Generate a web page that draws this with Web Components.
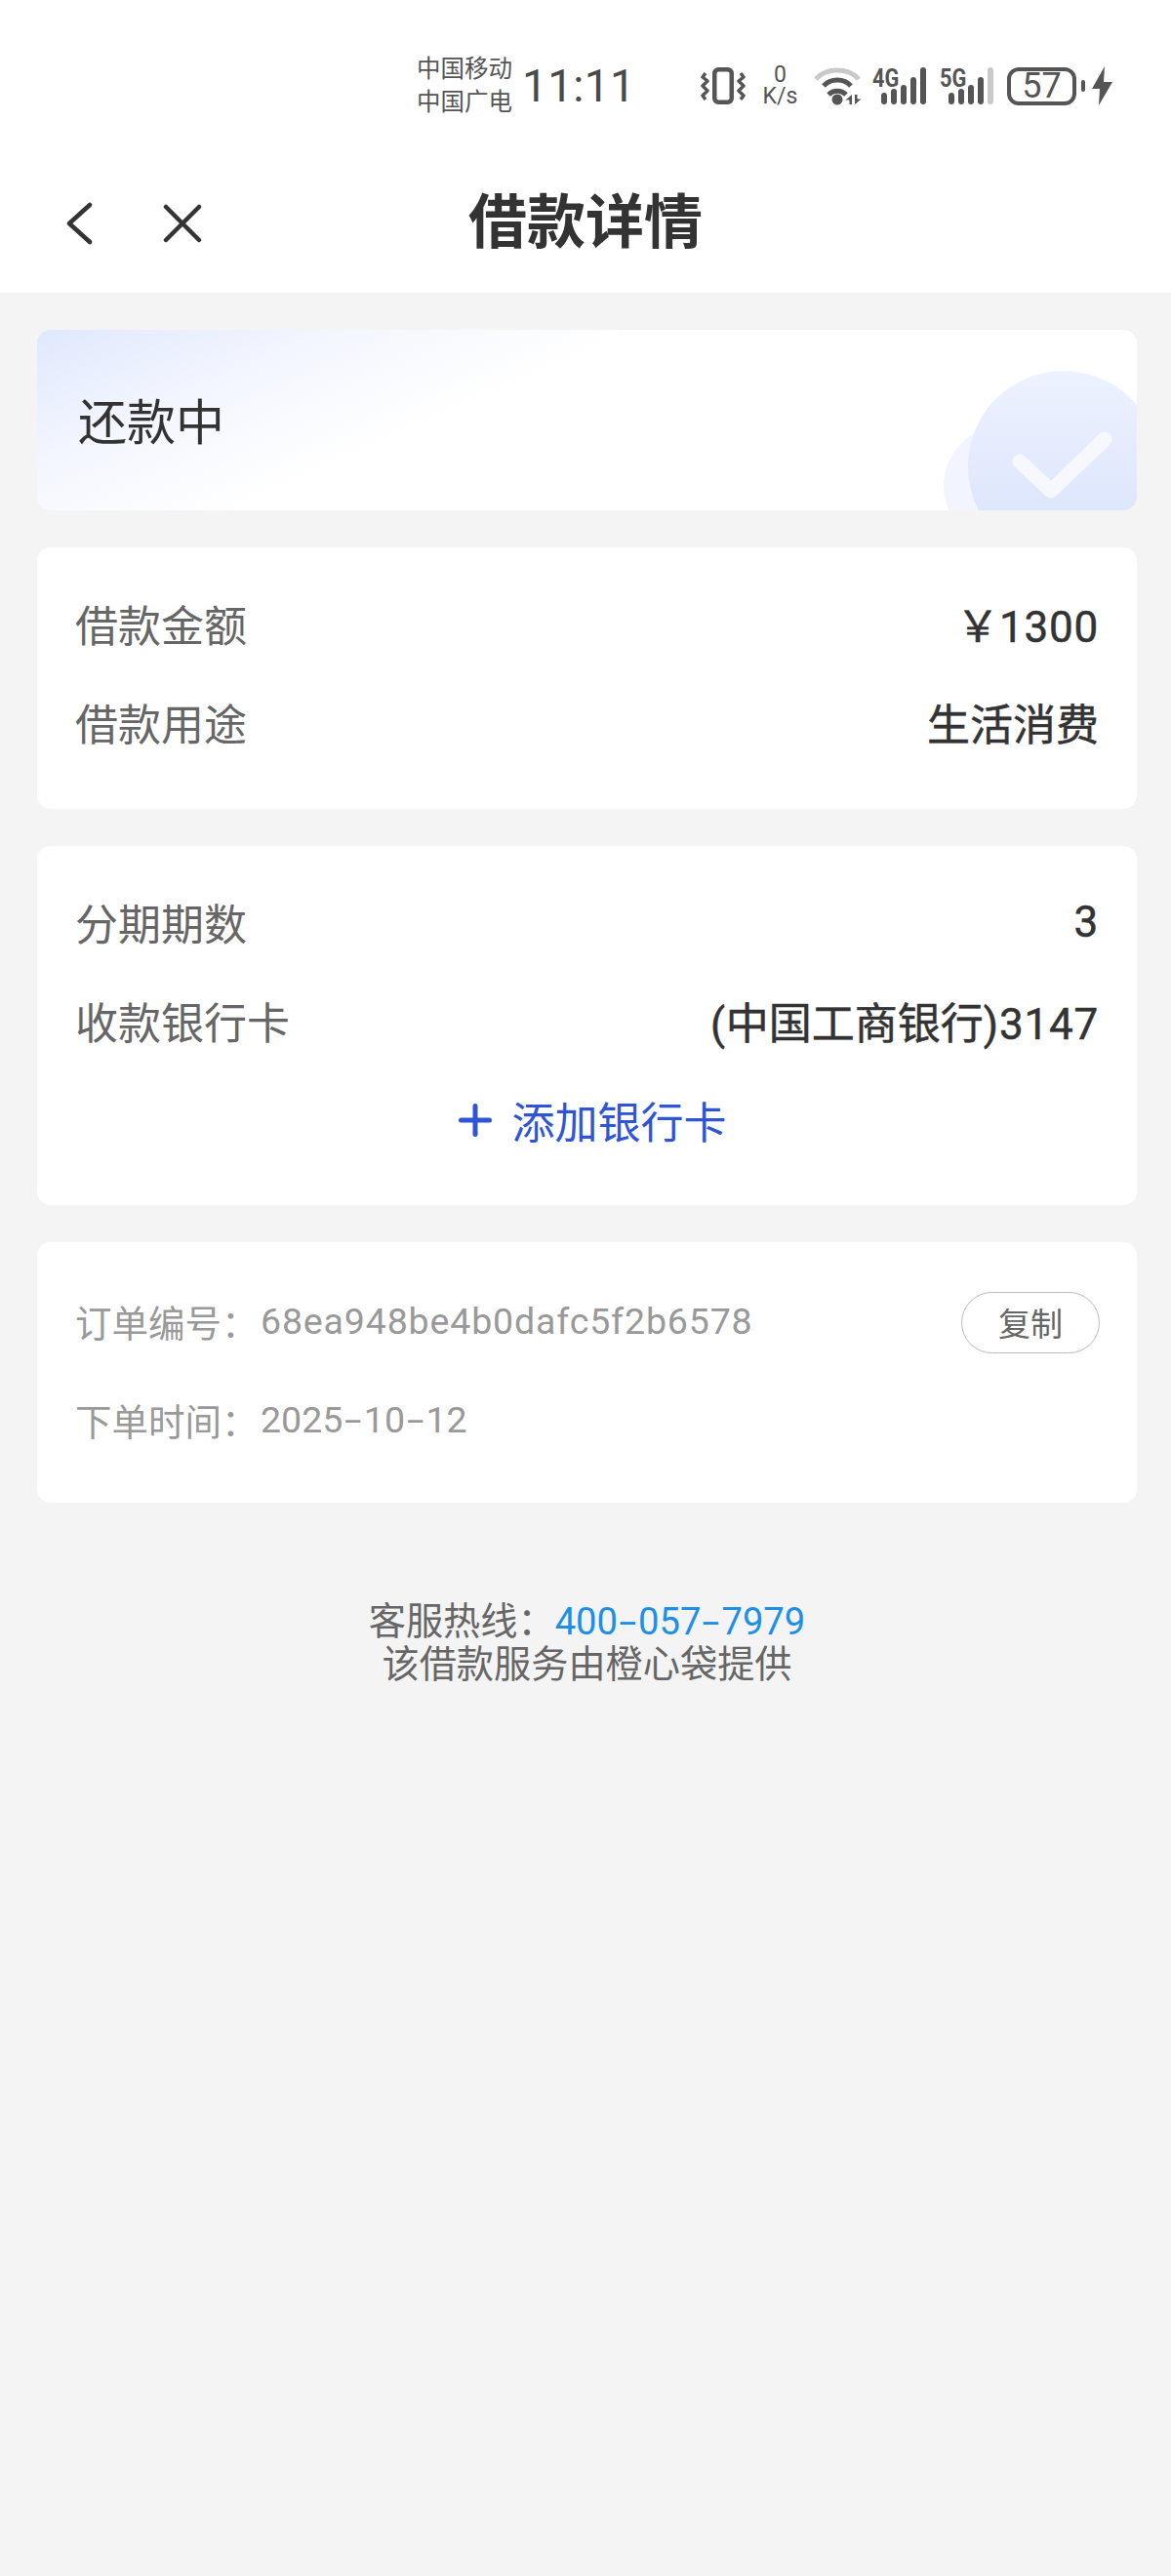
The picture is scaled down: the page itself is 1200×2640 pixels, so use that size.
<!DOCTYPE html>
<html lang="zh">
<head>
<meta charset="utf-8">
<title>借款详情</title>
<style>
  html, body { margin: 0; padding: 0; }
  body {
    width: 1200px; min-height: 2640px; background: #f4f4f4; color: #333;
    font-family: Roboto, "Noto Sans CJK SC", sans-serif;
  }
  main { display: flex; flex-direction: column; gap: 38px; padding: 38px 35px 0 38px; }
</style>
</head>
<body>
<app-header title="借款详情"></app-header>
<main>
  <status-banner>还款中</status-banner>
  <info-card>
    <info-row label="借款金额" value="￥1300"></info-row>
    <info-row label="借款用途" value="生活消费"></info-row>
  </info-card>
  <info-card>
    <info-row label="分期期数" value="3"></info-row>
    <info-row label="收款银行卡" value="(中国工商银行)3147"></info-row>
    <add-card>添加银行卡</add-card>
  </info-card>
  <order-card>
    <order-row label="订单编号：" value="68ea948be4b0dafc5f2b6578" style="--value-spacing: .85px"><copy-button>复制</copy-button></order-row>
    <order-row label="下单时间：" value="2025-10-12"></order-row>
  </order-card>
</main>
<service-footer phone="400-057-7979">该借款服务由橙心袋提供</service-footer>

<script>
function define(name, html, setup) {
  var template = document.createElement('template');
  template.innerHTML = html;
  customElements.define(name, class extends HTMLElement {
    constructor() {
      super();
      this.attachShadow({mode: 'open'});
      this.shadowRoot.appendChild(template.content.cloneNode(true));
    }
    connectedCallback() {
      if(setup) setup(this, this.shadowRoot);
    }
  });
}

// the phone's font has a much wider hyphen than Roboto
function wideHyphens(text) {
  return text.replace(/-/g, '<span class="h">-</span>');
}

define('signal-icon', `
  <style>
    :host { display: block; position: relative; width: 56px; height: 40px; flex: none; }
    svg { display: block; }
    .net { position: absolute; left: 0; top: 1px; font-size: 25px; line-height: 24px; font-weight: 700; color: #555;
      transform: scaleX(.87); transform-origin: left center; }
  </style>
  <svg width="56" height="40" viewBox="0 0 56 40" fill="none" stroke="#555" stroke-width="6" stroke-linecap="round">
    <path d="M12 30v6M22 26v10M32 22v14M42 14v22"/>
    <path id="last" d="M52 4v32"/>
  </svg>
  <span class="net"></span>
`, function(el, root) {
  root.querySelector('.net').textContent = el.getAttribute('net');
  if(el.hasAttribute('weak')) root.getElementById('last').setAttribute('stroke', '#c9c9c9');
});

define('status-bar', `
  <style>
    :host { display: flex; align-items: center; height: 160px; padding: 16px 0 0 427px; box-sizing: border-box; color: #555; }
    .carrier { width: 100px; font-size: 24.5px; line-height: 34px; white-space: nowrap; }
    .time { margin-left: 8px; width: 183px; font-size: 46px; letter-spacing: .3px; color: #4a4a4a; }
    .speed { margin-left: 17px; width: 37px; text-align: center; font-size: 23px; line-height: 22px; white-space: nowrap; }
    svg { display: block; flex: none; }
    .wifi { margin-left: 15px; }
    signal-icon { margin-left: 13px; }
    .g4 { margin-left: 9px; }
    .battery { margin-left: 13px; width: 71px; height: 39px; box-sizing: border-box; border: 4px solid #555; border-radius: 12px;
      display: flex; align-items: center; justify-content: center; font-size: 36px; line-height: 31px; }
    .nub { margin-left: 5px; width: 4px; height: 12px; border-radius: 2px; background: #555; }
    .bolt { margin-left: 7px; }
  </style>
  <div class="carrier">中国移动<br>中国广电</div>
  <div class="time">11:11</div>
  <svg width="46" height="40" viewBox="0 0 46 40" fill="none" stroke="#555">
    <rect x="14.25" y="3.25" width="17.5" height="33.5" rx="4" stroke-width="4.5"/>
    <path stroke-width="3.5" stroke-linejoin="round" d="M5 7L2 11l5 4-5 5 5 5-5 5 3 4M41 7l3 4-5 4 5 5-5 5 5 5-3 4"/>
  </svg>
  <div class="speed">0<br>K/s</div>
  <svg class="wifi" width="52" height="40" viewBox="0 0 52 40" fill="none">
    <path d="M3 13C14 1 36 1 47 13" stroke="#c9c9c9" stroke-width="5"/>
    <path d="M11 20C18 12 32 12 39 20" stroke="#555" stroke-width="5"/>
    <path d="M16 29C21 24 29 24 34 29" stroke="#555" stroke-width="5"/>
    <circle cx="25" cy="34" r="5.5" fill="#555"/>
    <path d="M40 29v10h-2.500v-4.500h-4zM43 39V29h2.500v4.500h4z" fill="#555"/>
  </svg>
  <signal-icon class="g4" net="4G"></signal-icon>
  <signal-icon net="5G" weak></signal-icon>
  <div class="battery">57</div>
  <div class="nub"></div>
  <svg class="bolt" width="21" height="40" viewBox="0 0 21 40"><path d="M13 0L0 23h8L7 40l14-24h-9z" fill="#555"/></svg>
`);

define('app-header', `
  <style>
    :host { display: block; background: #fff; height: 300px; }
    nav { display: grid; grid-template-columns: 1fr auto 1fr; align-items: center; height: 138px; }
    .icons { display: flex; align-items: center; gap: 71px; padding-left: 66px; }
    svg { display: block; }
    h1 { margin: 0; font-size: 60px; line-height: 70px; font-weight: 700; color: #333; }
  </style>
  <status-bar></status-bar>
  <nav>
    <div class="icons">
      <svg width="30" height="44" viewBox="0 0 30 44" fill="none" stroke="#333" stroke-width="4.500" stroke-linecap="round" stroke-linejoin="round"><path d="M26 3L5 22l21 19"/></svg>
      <svg width="40" height="40" viewBox="0 0 40 40" fill="none" stroke="#333" stroke-width="4.500" stroke-linecap="round"><path d="M3 3l34 34M37 3L3 37"/></svg>
    </div>
    <h1 id="title"></h1>
    <div></div>
  </nav>
`, function(el, root) {
  root.getElementById('title').textContent = el.getAttribute('title');
});

define('status-banner', `
  <style>
    :host { display: block; position: relative; overflow: hidden; height: 185px; border-radius: 14px;
      background: linear-gradient(156deg, #e0e8fd 0%, #f3f6fe 20%, #fff 40%); }
    .text { display: flex; align-items: center; height: 100%; box-sizing: border-box; padding: 0 0 4px 42px; font-size: 50px; color: #333; }
    svg { position: absolute; right: 0; top: 0; }
  </style>
  <svg width="260" height="185" viewBox="0 0 260 185">
    <defs>
      <linearGradient id="disc" x1="0" y1="0" x2="0" y2="1">
        <stop offset="0" stop-color="#edf2fe"/><stop offset="1" stop-color="#d9e2fc"/>
      </linearGradient>
    </defs>
    <circle cx="124" cy="160" r="62" fill="#f2f5fe"/>
    <circle cx="185" cy="140" r="98" fill="url(#disc)"/>
    <path d="M140 135l32 30 55-53" fill="none" stroke="#f6f8fe" stroke-width="15" stroke-linecap="round" stroke-linejoin="round"/>
  </svg>
  <div class="text"><slot></slot></div>
`);

define('info-card', `
  <style>
    :host { display: block; background: #fff; border-radius: 14px; padding: 27px 39px 39px 39px; }
  </style>
  <slot></slot>
`);

define('info-row', `
  <style>
    :host { display: flex; justify-content: space-between; align-items: center; height: 101px; font-size: 44px; white-space: nowrap; }
    .label { color: #666; }
    .value { color: #333; -webkit-text-stroke: .5px #333; }
    .num { letter-spacing: .8px; }
  </style>
  <span class="label"></span>
  <span class="value"></span>
`, function(el, root) {
  root.querySelector('.label').textContent = el.getAttribute('label');
  root.querySelector('.value').innerHTML = el.getAttribute('value').replace(/[0-9()]+/g, '<span class="num">$&</span>');
});

define('add-card', `
  <style>
    :host { display: flex; justify-content: center; align-items: center; gap: 18px; height: 100px; box-sizing: border-box; font-size: 44px; color: #2f55d4; padding: 4px 0 0 8px; }
    svg { display: block; }
  </style>
  <svg width="40" height="40" viewBox="0 0 40 40" fill="none" stroke="#2f55d4" stroke-width="5" stroke-linecap="round"><path d="M20 5.500v29M5.500 20h29"/></svg>
  <slot></slot>
`);

define('order-card', `
  <style>
    :host { display: block; background: #fff; border-radius: 14px; padding: 30px 38px 35px 39px; }
  </style>
  <slot></slot>
`);

define('order-row', `
  <style>
    :host { display: flex; align-items: center; height: 101px; font-size: 37.5px; color: #999; white-space: nowrap; }
    .label { width: 190px; flex: none; }
    .value { flex: 1; letter-spacing: var(--value-spacing, 0); }
    .h { display: inline-block; width: 21.5px; text-align: center; transform: scaleX(1.7); }
    ::slotted(copy-button) { margin-top: 3px; }
  </style>
  <span class="label"></span>
  <span class="value"></span>
  <slot></slot>
`, function(el, root) {
  root.querySelector('.label').textContent = el.getAttribute('label');
  root.querySelector('.value').innerHTML = wideHyphens(el.getAttribute('value'));
});

define('copy-button', `
  <style>
    :host { display: flex; align-items: center; justify-content: center; width: 142px; height: 63px; box-sizing: border-box;
      border: 1.5px solid #bbb; border-radius: 32px; font-size: 33px; color: #666; }
  </style>
  <slot></slot>
`);

define('service-footer', `
  <style>
    :host { display: block; text-align: center; padding: 100px 0 0 3px; font-size: 38.2px; line-height: 44px; color: #666; }
    .phone { color: #1e8fe6; }
    .h { display: inline-block; width: 21px; text-align: center; transform: scaleX(1.7); }
  </style>
  <div>客服热线：<span class="phone"></span></div>
  <div><slot></slot></div>
`, function(el, root) {
  root.querySelector('.phone').innerHTML = wideHyphens(el.getAttribute('phone'));
});
</script>
</body>
</html>
